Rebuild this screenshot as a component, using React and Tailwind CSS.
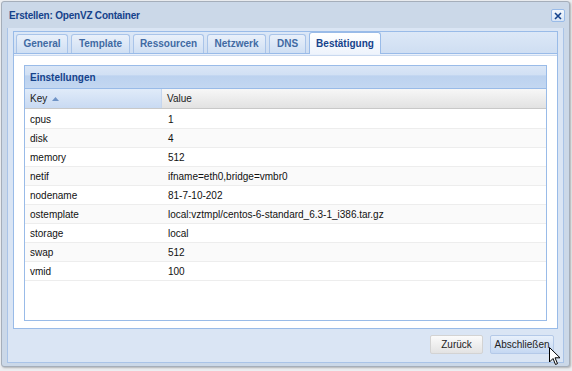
import React from 'react';

const rows = [
  ['cpus', '1'],
  ['disk', '4'],
  ['memory', '512'],
  ['netif', 'ifname=eth0,bridge=vmbr0'],
  ['nodename', '81-7-10-202'],
  ['ostemplate', 'local:vztmpl/centos-6-standard_6.3-1_i386.tar.gz'],
  ['storage', 'local'],
  ['swap', '512'],
  ['vmid', '100'],
];

const tabs = [
  ['General', 'w-[52px]'],
  ['Template', 'w-[59px]'],
  ['Ressourcen', 'w-[71px]'],
  ['Netzwerk', 'w-[59px]'],
  ['DNS', 'w-[37px]'],
  ['Bestätigung', 'w-[72px]'],
];

const Tab = ({ label, width, active }) => (
  <div
    className={
      active
        ? `${width} h-[22px] mr-[3px] flex items-center justify-center border border-b-0 border-[#99bbe8] rounded-t-[3px] bg-gradient-to-b from-[#ffffff] to-[#eef4fc] text-[#15428b] -mb-[1px] relative z-10`
        : `${width} h-[19px] mr-[3px] flex items-center justify-center border border-b-0 border-[#a9c4e9] rounded-t-[3px] bg-gradient-to-b from-[#e9f0fa] to-[#cfdff3] text-[#416aa3]`
    }
  >
    <span className="font-bold text-[10px] leading-none">{label}</span>
  </div>
);

export default function App() {
  return (
    <div
      className="relative w-[572px] h-[371px] bg-[#eceef1] overflow-hidden"
      style={{ fontFamily: '"Liberation Sans", Arial, sans-serif' }}
    >
      <div className="ml-[1px] mt-[1px] w-[569px] h-[366px] border border-[#a5aeba] rounded-[3px] bg-[#cbd8e8] flex flex-col shadow-[1px_1px_2px_rgba(0,0,0,0.25)]">
        {/* title bar */}
        <div className="h-[26px] flex items-center justify-between pl-[7px] pr-[4px] pt-[1px]">
          <span className="font-bold text-[10px] text-[#15428b] tracking-[-0.2px]">Erstellen: OpenVZ Container</span>
          <div className="w-[14px] h-[13px] rounded-[2px] border border-[#99bbe8] bg-gradient-to-b from-[#f4f8fd] to-[#d7e4f5] flex items-center justify-center">
            <svg width="8" height="8" viewBox="0 0 8 8">
              <path d="M1 1 L7 7 M7 1 L1 7" stroke="#15428b" strokeWidth="1.6" />
            </svg>
          </div>
        </div>

        {/* body */}
        <div className="mx-[5px] mb-[3px] flex-1 border border-t-0 border-[#a9c3e7] bg-[#dae5f4] flex flex-col px-[5px] pt-[3px]">
          {/* tab panel */}
          <div className="flex flex-col border border-[#99bbe8] bg-white h-[298px]">
            <div className="h-[22px] flex items-end pl-[2px] bg-gradient-to-b from-[#dce8f7] to-[#cfdef2] border-b border-[#99bbe8]">
              {tabs.map(([t, w]) => (
                <Tab key={t} label={t} width={w} active={t === 'Bestätigung'} />
              ))}
            </div>
            <div className="h-[2px] bg-[#eaf1fb] border-b border-[#c9d9ef]"></div>

            {/* grid panel */}
            <div className="mx-[10px] mt-[9px] h-[256px] border border-[#99bbe8] flex flex-col">
              <div className="h-[23px] flex items-center pl-[5px] border-b border-[#99bbe8] bg-[linear-gradient(to_bottom,#dae6f6_0%,#d1e0f4_40%,#bcd2ef_45%,#c3d7f1_100%)]">
                <span className="font-bold text-[10px] text-[#15428b]">Einstellungen</span>
              </div>
              <div className="h-[20px] flex text-[10px] text-[#222] border-b border-[#c8c8c8]">
                <div className="w-[137px] flex items-center pl-[5px] border-r border-[#c6d6ee] bg-gradient-to-b from-[#e0ebf9] to-[#c9daf2]">
                  Key
                  <svg width="7" height="4" viewBox="0 0 7 4" className="ml-[5px]">
                    <path d="M0 4 L3.5 0 L7 4 Z" fill="#6f93c6" />
                  </svg>
                </div>
                <div className="flex-1 flex items-center pl-[5px] bg-gradient-to-b from-[#f7f7f7] to-[#e2e2e2]">Value</div>
              </div>
              <div className="flex-1 bg-white pt-[1px]">
                {rows.map(([k, v], i) => (
                  <div
                    key={k}
                    className={`h-[19px] flex items-center text-[10px] text-[#111] border-b border-[#ededed] ${i % 2 === 1 ? 'bg-[#fafafa]' : 'bg-white'}`}
                  >
                    <div className="w-[137px] pl-[5px]">{k}</div>
                    <div className="flex-1 pl-[6px]">{v}</div>
                  </div>
                ))}
              </div>
            </div>
          </div>

          {/* buttons */}
          <div className="flex justify-end pt-[6px] pr-[4px] gap-[7px]">
            <div className="w-[53px] h-[19px] rounded-[2px] border border-[#d3d3d3] bg-gradient-to-b from-[#fbfbfb] to-[#e3e3e3] flex items-center justify-center text-[10px] text-[#222]">
              Zurück
            </div>
            <div className="w-[64px] h-[19px] rounded-[2px] border border-[#b4c9e8] bg-gradient-to-b from-[#e8f0fb] to-[#c5d8f2] flex items-center justify-center text-[10px] text-[#222]">
              Abschließen
            </div>
          </div>
        </div>
      </div>

      {/* mouse cursor */}
      <svg
        width="12"
        height="19"
        viewBox="0 0 12 19"
        className="absolute left-[549px] top-[347px]"
      >
        <path d="M0.5 0.5 L0.5 15 L4 11.5 L6.5 17.5 L8.5 16.6 L6 10.8 L11 10.8 Z" fill="#fff" stroke="#000" strokeWidth="1" />
      </svg>
    </div>
  );
}
